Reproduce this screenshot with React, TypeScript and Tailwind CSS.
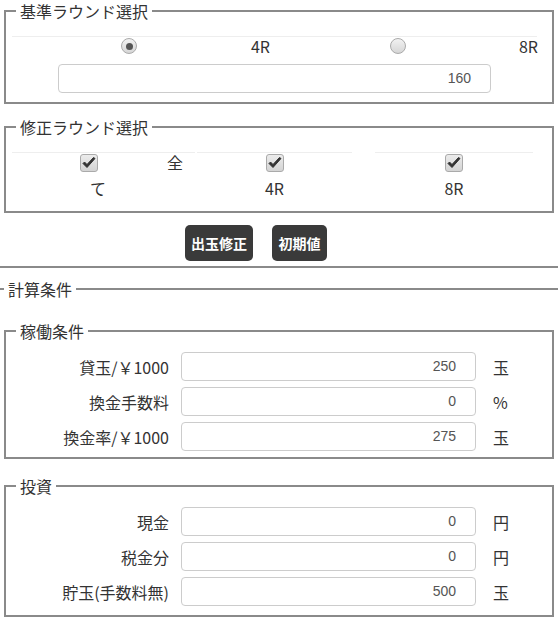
const jp = "font-['Noto_Sans_CJK_JP','Noto_Sans',sans-serif]";

function Radio({ checked }: { checked?: boolean }) {
  return (
    <span className="flex h-[16px] w-[16px] items-center justify-center rounded-full border border-[#aaa] bg-gradient-to-b from-[#f2f2f2] to-[#d6d6d6]">
      {checked && <span className="h-[7px] w-[7px] rounded-full bg-[#555]" />}
    </span>
  );
}

function Check() {
  return (
    <span className="flex h-[18px] w-[18px] items-center justify-center rounded-[3px] border border-[#aaa] bg-gradient-to-b from-[#ececec] to-[#d4d4d4]">
      <svg width="14" height="12" viewBox="0 0 14 12">
        <path d="M1 6.5 L5 10.5 L13 1.5 L11.5 0.5 L5 7.5 L2.5 5 Z" fill="#333" stroke="#333" strokeWidth="1" strokeLinejoin="round" />
      </svg>
    </span>
  );
}

function NumBox({ value, className }: { value: string; className: string }) {
  return (
    <div
      className={`flex h-[29px] items-center justify-end rounded-[4px] border border-[#ccc] bg-white pr-[19px] font-['Liberation_Sans',Arial,sans-serif] text-[14px] text-[#555] ${className}`}
    >
      {value}
    </div>
  );
}

function Field({ label, value, unit }: { label: string; value: string; unit: string }) {
  return (
    <div className="flex items-center">
      <div className="w-[157px] text-right text-[16px] leading-[20px]">{label}</div>
      <NumBox value={value} className="ml-[12px] w-[295px]" />
      <div className="ml-[17px] text-[16px] leading-[20px]">{unit}</div>
    </div>
  );
}

function Legend({ children }: { children: React.ReactNode }) {
  return <legend className="ml-[4px] px-[4px] text-[16px] leading-[22px]">{children}</legend>;
}

export default function App() {
  return (
    <div className={`w-[558px] bg-white pb-[7px] text-[#333] ${jp}`}>
      {/* base round */}
      <fieldset className="mx-[4px] border-2 border-[#8a8a8a] px-[6px] pb-[9px]">
        <Legend>基準ラウンド選択</Legend>
        <div className="mt-[14px] grid grid-cols-[263px_262px]">
          <div className="flex h-[19px] items-center border-t border-[#eee] pr-[5px]">
            <span className="ml-[109px]">
              <Radio checked />
            </span>
            <span className="ml-auto text-[16px] leading-[19px]">4R</span>
          </div>
          <div className="flex h-[19px] items-center border-t border-[#eee]">
            <span className="ml-[115px]">
              <Radio />
            </span>
            <span className="ml-auto -mr-[1px] text-[16px] leading-[19px]">8R</span>
          </div>
        </div>
        <NumBox value="160" className="ml-[46px] mt-[9px] w-[433px]" />
      </fieldset>

      {/* correction rounds */}
      <fieldset className="mx-[4px] mt-[12px] border-2 border-[#8a8a8a] px-[6px] pb-[13px]">
        <Legend>修正ラウンド選択</Legend>
        <div className="mt-[14px] flex text-[16px]">
          <div className="w-[183px] border-t border-[#eee]">
            <div className="flex h-[19px] items-center">
              <span className="ml-[68px]">
                <Check />
              </span>
              <span className="ml-[69px] leading-[19px]">全</span>
            </div>
            <div className="ml-[78px] mt-[6px] leading-[20px]">て</div>
          </div>
          <div className="ml-[2px] flex w-[155px] flex-col items-center border-t border-[#eee]">
            <div className="flex h-[19px] items-center">
              <Check />
            </div>
            <div className="mt-[6px] leading-[20px]">4R</div>
          </div>
          <div className="ml-[23px] flex w-[158px] flex-col items-center border-t border-[#eee]">
            <div className="flex h-[19px] items-center">
              <Check />
            </div>
            <div className="mt-[6px] leading-[20px]">8R</div>
          </div>
        </div>
      </fieldset>

      <div className="mt-[12px] flex gap-[19px] pl-[185px]">
        <button className="h-[36px] w-[68px] rounded-[5px] bg-[#3a3a3a] text-[14px] font-bold text-white">出玉修正</button>
        <button className="h-[36px] w-[55px] rounded-[5px] bg-[#3a3a3a] text-[14px] font-bold text-white">初期値</button>
      </div>

      <div className="mt-[5px] border-t-2 border-[#8a8a8a]" />

      {/* calculation settings */}
      <fieldset className="mt-[10px] border-t-2 border-[#8a8a8a]">
        <legend className="ml-[4px] px-[4px] text-[16px] leading-[22px]">計算条件</legend>

        <fieldset className="mx-[4px] mt-[20px] border-2 border-[#8a8a8a] px-[6px] pb-[6px]">
          <Legend>稼働条件</Legend>
          <div className="mt-[10px] flex flex-col gap-[6px]">
            <Field label="貸玉/￥1000" value="250" unit="玉" />
            <Field label="換金手数料" value="0" unit="%" />
            <Field label="換金率/￥1000" value="275" unit="玉" />
          </div>
        </fieldset>

        <fieldset className="mx-[4px] mt-[16px] border-2 border-[#8a8a8a] px-[6px] pb-[9px]">
          <Legend>投資</Legend>
          <div className="mt-[10px] flex flex-col gap-[6px]">
            <Field label="現金" value="0" unit="円" />
            <Field label="税金分" value="0" unit="円" />
            <Field label="貯玉(手数料無)" value="500" unit="玉" />
          </div>
        </fieldset>
      </fieldset>
    </div>
  );
}
